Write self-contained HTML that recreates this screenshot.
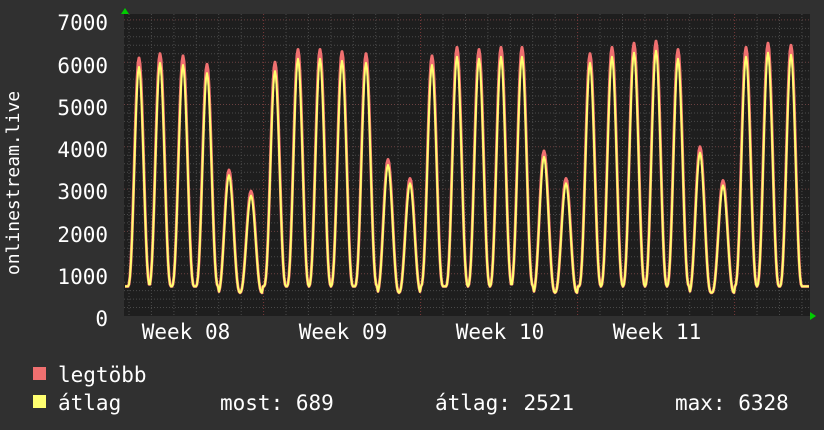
<!DOCTYPE html>
<html><head><meta charset="utf-8"><style>
body{margin:0;background:#303030;width:824px;height:430px;overflow:hidden}
</style></head><body>
<svg id="s" width="824" height="430" style="position:absolute;left:0;top:0" xmlns="http://www.w3.org/2000/svg">
<rect x="124" y="14" width="686" height="302" fill="#1e1e1e"/>
<g id="grid"></g>
<path id="red" fill="none" stroke="#f07070" stroke-width="3" stroke-linejoin="round"/>
<path id="yel" fill="none" stroke="#ffff70" stroke-width="2" stroke-linejoin="round"/>
<polygon points="121,14 125,8 129,14" fill="#00cc00"/>
<polygon points="810,312 816,316 810,320" fill="#00cc00"/>
<g font-family="DejaVu Sans Mono, Liberation Mono, monospace" font-size="21" fill="#fff" text-anchor="end">
<text x="108" y="30">7000</text><text x="108" y="73">6000</text><text x="108" y="115">5000</text><text x="108" y="157">4000</text><text x="108" y="199">3000</text><text x="108" y="242">2000</text><text x="108" y="284">1000</text><text x="108" y="326">0</text>
</g>
<g font-family="DejaVu Sans Mono, Liberation Mono, monospace" font-size="21" fill="#fff" text-anchor="middle">
<text x="186" y="339">Week 08</text><text x="343" y="339">Week 09</text><text x="500" y="339">Week 10</text><text x="657" y="339">Week 11</text>
</g>
<text transform="translate(19,183) rotate(-90)" text-anchor="middle" font-family="DejaVu Sans Mono, Liberation Mono, monospace" font-size="18" fill="#fff">onlinestream.live</text>
<rect x="33" y="367" width="13" height="13" fill="#f07070"/>
<rect x="33" y="395" width="13" height="13" fill="#ffff70"/>
<g font-family="DejaVu Sans Mono, Liberation Mono, monospace" font-size="21" fill="#fff">
<text x="58" y="382">legtöbb</text>
<text x="58" y="410">átlag</text>
<text x="220" y="410">most: 689</text>
<text x="435" y="410">átlag: 2521</text>
<text x="675" y="410">max: 6328</text>
</g>
</svg>
<script>
var g=document.getElementById('grid'),h='';
function Y(v){return 316-v*0.0423;}
for(var v=200;v<7100;v+=200){var y=Y(v).toFixed(1),maj=v%1000==0;h+='<line x1="124" x2="810" y1="'+y+'" y2="'+y+'" stroke="'+(maj?'#6a4040':'#4a4a4a')+'" stroke-dasharray="1,2"/>';}
for(var x=129;x<810;x+=22.43){var r=((x-264)%157+157)%157;var maj=r<3||r>154;h+='<line y1="14" y2="316" x1="'+x.toFixed(1)+'" x2="'+x.toFixed(1)+'" stroke="'+(maj?'#7a3a3a':'#4a4a4a')+'" stroke-dasharray="1,2"/>';}
g.innerHTML=h;
var px=[139,160,183,207,229,251,275,298,320,342,366,388,410,432,457,479,501,522,544,566,590,612,634,656,678,700,723,746,768,791];
var A=[6100,6200,6150,5950,3450,2950,6000,6300,6300,6250,6200,3700,3250,6150,6350,6300,6350,6350,3900,3250,6200,6350,6450,6500,6300,4000,3200,6350,6450,6400];
function val(x,k){var best=0;for(var i=0;i<px.length;i++){var d=(x-px[i])/11.2;if(Math.abs(d)<1){var mn=(A[i]<4500?550:700);var f=Math.pow(Math.cos(d*Math.PI/2),2.6);var a=A[i]*k;best=Math.max(best,mn+(a-mn)*f);}}return best||700;}
function path(k){var d='';for(var x=125;x<=809;x+=1){d+=(x==125?'M':'L')+x+','+Y(val(x,k)).toFixed(1);}return d;}
document.getElementById('red').setAttribute('d',path(1));
document.getElementById('yel').setAttribute('d',path(0.965));
</script>
</body></html>
